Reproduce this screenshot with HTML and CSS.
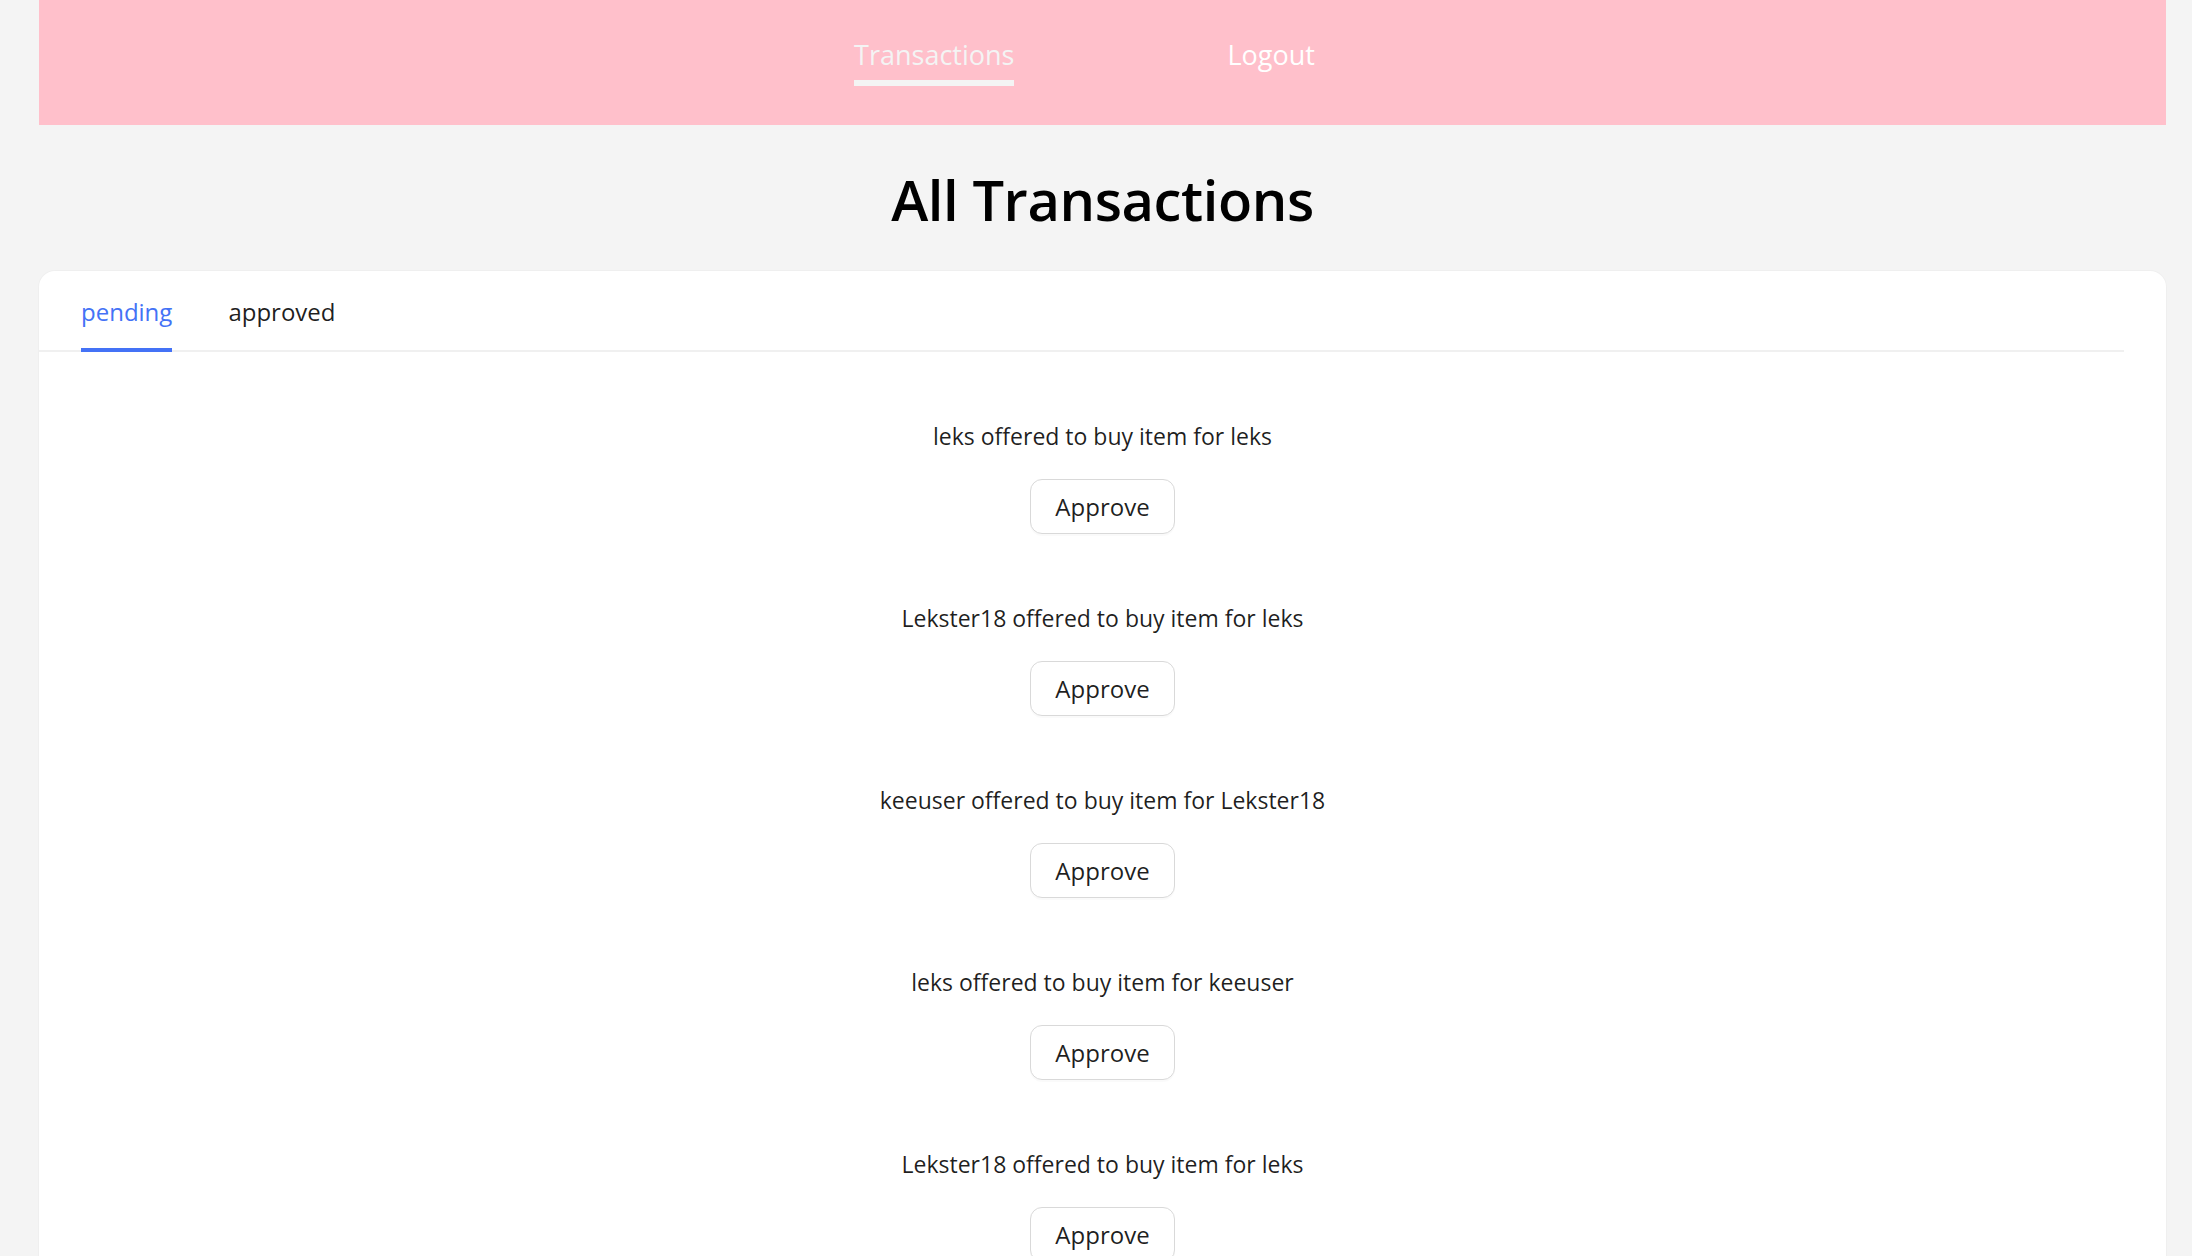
FILE: index.html
```html
<!DOCTYPE html>
<html lang="en">
<head>
<meta charset="utf-8">
<title>All Transactions</title>
<link rel="stylesheet" href="styles.css">
</head>
<body>
<div class="page">
  <header class="topbar">
    <nav class="topnav">
      <a class="topnav-link is-active" href="#">Transactions</a>
      <a class="topnav-link" href="#">Logout</a>
    </nav>
  </header>
  <h1 class="title">All Transactions</h1>
  <section class="card">
    <div class="tabs-nav">
      <div class="tab is-active">pending</div>
      <div class="tab">approved</div>
    </div>
    <div class="list">
      <div class="row">
        <p class="row-text">leks offered to buy item for leks</p>
        <button class="btn">Approve</button>
      </div>
      <div class="row">
        <p class="row-text">Lekster18 offered to buy item for leks</p>
        <button class="btn">Approve</button>
      </div>
      <div class="row">
        <p class="row-text">keeuser offered to buy item for Lekster18</p>
        <button class="btn">Approve</button>
      </div>
      <div class="row">
        <p class="row-text">leks offered to buy item for keeuser</p>
        <button class="btn">Approve</button>
      </div>
      <div class="row">
        <p class="row-text">Lekster18 offered to buy item for leks</p>
        <button class="btn">Approve</button>
      </div>
    </div>
  </section>
</div>
</body>
</html>
```
FILE: styles.css
```css
html, body {
  margin: 0;
  padding: 0;
  background: #f4f4f4;
  font-family: "Open Sans", "Noto Sans", "Liberation Sans", sans-serif;
  color: rgba(0, 0, 0, 0.88);
  overflow: hidden;
}

.page {
  padding: 0 26px 0 39px;
}

.topbar {
  background: #ffc0cb;
  height: 125px;
  box-sizing: border-box;
  padding-top: 35px;
}

.topnav {
  display: flex;
  justify-content: center;
  gap: 213px;
  padding-right: 36px;
}

.topnav-link {
  display: flex;
  flex-direction: column;
  font-size: 27px;
  line-height: 39px;
  color: #ffffff;
  text-decoration: none;
}

.topnav-link.is-active {
  color: #f4f4f4;
}

.topnav-link.is-active::after {
  content: "";
  display: block;
  height: 6px;
  margin-top: 6px;
  background: #f4f4f4;
}

.title {
  margin: 0;
  padding: 41px 0 38px;
  text-align: center;
  font-size: 56px;
  line-height: 67px;
  font-weight: 600;
  letter-spacing: -0.4px;
  color: #000;
}

.card {
  background: #fff;
  border-radius: 16px 16px 0 0;
  min-height: 1100px;
  box-shadow: 0 0 0 1px rgba(0, 0, 0, 0.02);
}

.tabs-nav {
  display: flex;
  gap: 56px;
  padding-left: 42px;
  margin-right: 42px;
  border-bottom: 2px solid #f0f0f0;
}

.tab {
  position: relative;
  font-size: 24px;
  line-height: 32px;
  padding: 25px 0 22px;
  color: rgba(0, 0, 0, 0.88);
}

.tab.is-active {
  color: #4472f6;
}

.tab.is-active::after {
  content: "";
  position: absolute;
  left: 0;
  right: 0;
  bottom: -2px;
  height: 4px;
  background: #4472f6;
}

.list {
  display: flex;
  flex-direction: column;
  align-items: center;
  gap: 68px;
  padding-top: 68px;
}

.row {
  display: flex;
  flex-direction: column;
  align-items: center;
}

.row-text {
  margin: 0;
  font-size: 23px;
  line-height: 32px;
}

.btn {
  margin-top: 27px;
  height: 55px;
  padding: 0 24px;
  font-family: inherit;
  font-size: 24px;
  color: rgba(0, 0, 0, 0.88);
  background: #fff;
  border: 1px solid #d9d9d9;
  border-radius: 12px;
  box-shadow: 0 2px 0 rgba(0, 0, 0, 0.02);
  cursor: pointer;
}
```
